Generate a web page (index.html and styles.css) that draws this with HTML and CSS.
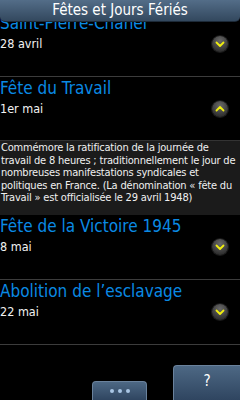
FILE: index.html
```html
<!DOCTYPE html>
<html lang="fr">
<head>
<meta charset="utf-8">
<link rel="stylesheet" href="styles.css">
</head>
<body>
<div class="screen">
  <div class="list">
    <div class="item first">
      <div class="texts">
        <div class="title">Saint-Pierre-Chanel</div>
        <div class="date">28 avril</div>
      </div>
      <span class="chev"><svg viewBox="0 0 16 16" width="16" height="16"><path d="M4.5 6.5 L8 10 L11.5 6.5" fill="none" stroke="#f0ee10" stroke-width="1.8" stroke-linecap="round" stroke-linejoin="round"/></svg></span>
    </div>
    <div class="item open">
      <div class="texts">
        <div class="title">Fête du Travail</div>
        <div class="date">1er mai</div>
      </div>
      <span class="chev"><svg viewBox="0 0 16 16" width="16" height="16"><path d="M4.5 9.5 L8 6 L11.5 9.5" fill="none" stroke="#f0ee10" stroke-width="1.8" stroke-linecap="round" stroke-linejoin="round"/></svg></span>
    </div>
    <div class="desc">Commémore la ratification de la journée de travail de 8 heures ; traditionnellement le jour de nombreuses manifestations syndicales et politiques en France. (La dénomination « fête du Travail » est officialisée le 29 avril 1948)</div>
    <div class="item">
      <div class="texts">
        <div class="title">Fête de la Victoire 1945</div>
        <div class="date">8 mai</div>
      </div>
      <span class="chev"><svg viewBox="0 0 16 16" width="16" height="16"><path d="M4.5 6.5 L8 10 L11.5 6.5" fill="none" stroke="#f0ee10" stroke-width="1.8" stroke-linecap="round" stroke-linejoin="round"/></svg></span>
    </div>
    <div class="item">
      <div class="texts">
        <div class="title">Abolition de l’esclavage</div>
        <div class="date">22 mai</div>
      </div>
      <span class="chev"><svg viewBox="0 0 16 16" width="16" height="16"><path d="M4.5 6.5 L8 10 L11.5 6.5" fill="none" stroke="#f0ee10" stroke-width="1.8" stroke-linecap="round" stroke-linejoin="round"/></svg></span>
    </div>
  </div>
  <div class="header">Fêtes et Jours Fériés</div>
  <div class="toolbar">
    <div class="btn more"><span class="dot"></span><span class="dot"></span><span class="dot"></span></div>
    <div class="btn help">?</div>
  </div>
</div>
</body>
</html>
```
FILE: styles.css
```css
html, body {
  margin: 0;
  padding: 0;
  background: #000;
}
.screen {
  position: relative;
  width: 240px;
  height: 400px;
  overflow: hidden;
  background: #000;
  font-family: "DejaVu Sans", sans-serif;
  font-stretch: condensed;
  color: #fff;
  display: flex;
  flex-direction: column;
}
.header {
  position: absolute;
  top: 0;
  left: 0;
  right: 0;
  height: 22px;
  box-sizing: border-box;
  background: linear-gradient(#536d88, #33485e);
  border-bottom: 1px solid #1d2a38;
  border-radius: 0 0 5px 5px;
  text-align: center;
  font-size: 15px;
  line-height: 21px;
  color: #fff;
}
.list {
  margin-top: 12px;
  display: flex;
  flex-direction: column;
}
.item {
  height: 64px;
  border-bottom: 1px solid #3c3c3c;
  display: flex;
  align-items: flex-start;
  justify-content: space-between;
}
.item.open {
  height: 63px;
  border-bottom: 0;
}
.texts {
  display: flex;
  flex-direction: column;
}
.title {
  color: #0a8ae4;
  font-size: 17px;
  line-height: 22px;
  white-space: nowrap;
}
.date {
  font-size: 12.5px;
  line-height: 16px;
  margin-top: 2px;
  color: #f2f2f2;
}
.chev {
  margin-top: 24px;
  margin-right: 12px;
  width: 16px;
  height: 16px;
  border-radius: 50%;
  background: radial-gradient(circle at 50% 30%, #6a6a6a, #333 70%, #222);
  box-shadow: 0 0 0 1px #1a1a1a;
  display: flex;
}
.desc {
  background: #1b1b1b;
  border-top: 1px solid #333;
  height: 75px;
  box-sizing: border-box;
  padding: 1px 0 0 1px;
  font-size: 11px;
  line-height: 12.5px;
  letter-spacing: -0.2px;
  color: #f0f0f0;
}
.toolbar {
  position: absolute;
  left: 0;
  right: 0;
  bottom: 0;
  height: 36px;
  display: flex;
  align-items: flex-end;
}
.btn {
  background: linear-gradient(#4d6884, #2f4560);
  border: 1px solid #6a829c;
  border-bottom: 0;
  border-radius: 4px 4px 0 0;
  box-sizing: border-box;
}
.more {
  margin-left: 92px;
  width: 55px;
  height: 19px;
  display: flex;
  justify-content: center;
  align-items: center;
  gap: 4px;
}
.dot {
  width: 4px;
  height: 4px;
  border-radius: 50%;
  background: #a9c6e4;
}
.help {
  margin-left: 26px;
  width: 67px;
  height: 35px;
  border-right: 0;
  border-radius: 4px 0 0 0;
  text-align: center;
  font-size: 15px;
  line-height: 30px;
  color: #fff;
}
```
